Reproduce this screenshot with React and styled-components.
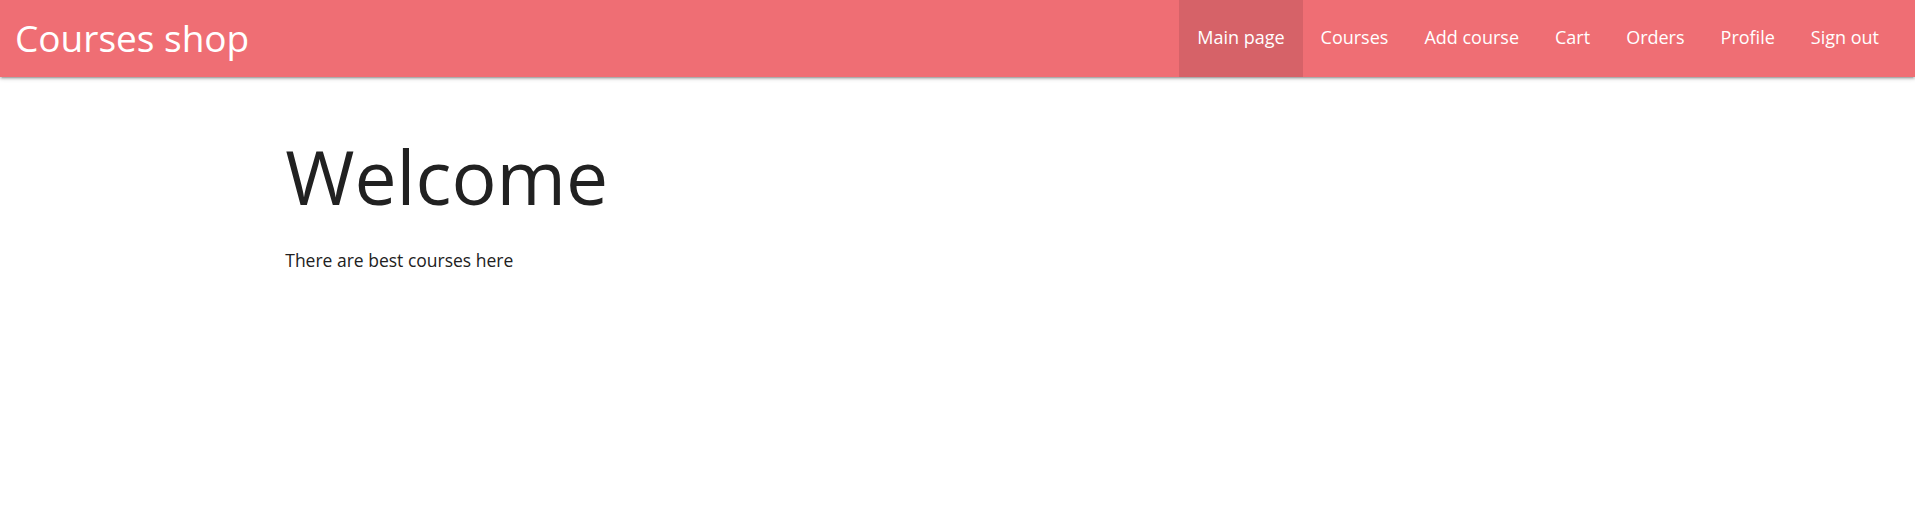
import React from 'react';
import styled, { createGlobalStyle } from 'styled-components';

const GlobalStyle = createGlobalStyle`
    html, body {
        margin: 0;
        padding: 0;
        background: #fff;
        font-family: "Segoe UI", "Open Sans", sans-serif;
        color: rgba(0, 0, 0, 0.87);
    }
`;

const Nav = styled.nav`
    height: 77px;
    background-color: #ef6e74;
    box-shadow: 0 2px 2px 0 rgba(0, 0, 0, 0.14), 0 3px 1px -2px rgba(0, 0, 0, 0.12), 0 1px 5px 0 rgba(0, 0, 0, 0.2);
    display: flex;
    align-items: stretch;
    justify-content: space-between;
    padding: 0 18px 0 15px;
`;

const Brand = styled.a`
    display: flex;
    align-items: center;
    color: #fff;
    font-size: 37px;
    text-decoration: none;
    padding-bottom: 3px;
`;

const Menu = styled.ul`
    display: flex;
    margin: 0;
    padding: 0;
    list-style: none;
`;

const MenuLink = styled.a`
    display: flex;
    align-items: center;
    height: 100%;
    box-sizing: border-box;
    padding: 0 18px 4px;
    color: #fff;
    font-size: 18px;
    text-decoration: none;
    background-color: ${p => (p.$active ? 'rgba(0, 0, 0, 0.1)' : 'transparent')};
`;

const Container = styled.main`
    width: 70%;
    margin: 0 auto;
`;

const Title = styled.h1`
    margin: 58px 0 30px -2px;
    font-size: 75px;
    font-weight: 400;
    line-height: 1.1;
    color: #212121;
`;

const Text = styled.p`
    margin: 0 0 0 -2px;
    font-size: 17.5px;
    color: #212121;
`;

const links = ['Main page', 'Courses', 'Add course', 'Cart', 'Orders', 'Profile', 'Sign out'];

const App = () => {
    return (
        <>
            <GlobalStyle />
            <Nav>
                <Brand href="#">Courses shop</Brand>
                <Menu>
                    {links.map((l, i) => (
                        <li key={l}>
                            <MenuLink href="#" $active={i === 0}>{l}</MenuLink>
                        </li>
                    ))}
                </Menu>
            </Nav>
            <Container>
                <Title>Welcome</Title>
                <Text>There are best courses here</Text>
            </Container>
        </>
    );
};

export default App;
